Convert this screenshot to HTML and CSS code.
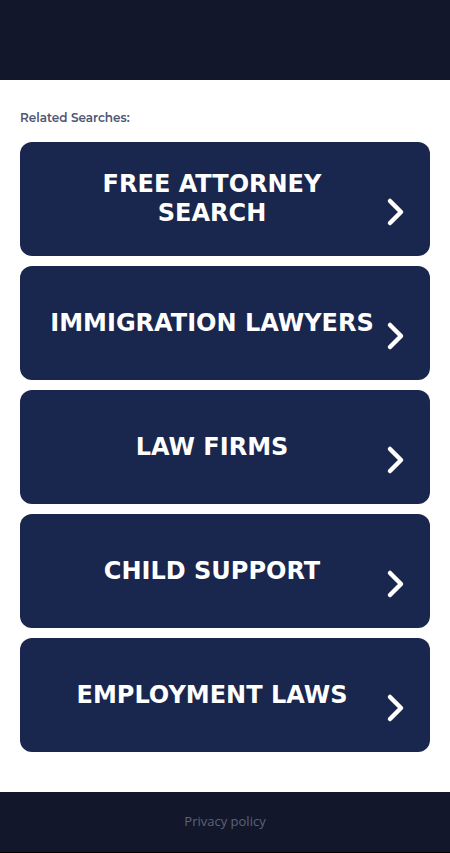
FILE: index.html
```html
<!DOCTYPE html>
<html>
<head>
<meta charset="utf-8">
<link rel="stylesheet" href="styles.css">
</head>
<body>
<header class="top"></header>
<main class="content">
  <div class="label">Related Searches:</div>
  <div class="list">
    <a class="btn"><span class="txt">FREE ATTORNEY SEARCH</span><svg class="chev" width="20" height="30" viewBox="0 0 20 30"><path d="M4 4 L15 15 L4 26" fill="none" stroke="#fff" stroke-width="4.5" stroke-linecap="round" stroke-linejoin="round"/></svg></a>
    <a class="btn"><span class="txt">IMMIGRATION LAWYERS</span><svg class="chev" width="20" height="30" viewBox="0 0 20 30"><path d="M4 4 L15 15 L4 26" fill="none" stroke="#fff" stroke-width="4.5" stroke-linecap="round" stroke-linejoin="round"/></svg></a>
    <a class="btn"><span class="txt">LAW FIRMS</span><svg class="chev" width="20" height="30" viewBox="0 0 20 30"><path d="M4 4 L15 15 L4 26" fill="none" stroke="#fff" stroke-width="4.5" stroke-linecap="round" stroke-linejoin="round"/></svg></a>
    <a class="btn"><span class="txt">CHILD SUPPORT</span><svg class="chev" width="20" height="30" viewBox="0 0 20 30"><path d="M4 4 L15 15 L4 26" fill="none" stroke="#fff" stroke-width="4.5" stroke-linecap="round" stroke-linejoin="round"/></svg></a>
    <a class="btn"><span class="txt">EMPLOYMENT LAWS</span><svg class="chev" width="20" height="30" viewBox="0 0 20 30"><path d="M4 4 L15 15 L4 26" fill="none" stroke="#fff" stroke-width="4.5" stroke-linecap="round" stroke-linejoin="round"/></svg></a>
  </div>
</main>
<footer class="foot"><span class="privacy">Privacy policy</span></footer>
</body>
</html>
```
FILE: styles.css
```css
html, body { margin: 0; padding: 0; background: #fff; }
body { width: 450px; }
.top { height: 80px; background: #12172c; }
.content { padding: 30px 20px 40px; }
.label {
  font-family: "Montserrat", "Lato", "Noto Sans", sans-serif;
  font-size: 12px;
  font-weight: 600;
  color: #505670;
  height: 32px;
  line-height: 16px;
}
.list { display: flex; flex-direction: column; gap: 10px; }
.btn {
  display: flex;
  align-items: center;
  height: 114px;
  box-sizing: border-box;
  background: #19264d;
  border-radius: 12px;
  padding: 0 24px 0 18px;
  text-decoration: none;
}
.txt {
  flex: 1;
  text-align: center;
  font-family: "DejaVu Sans", sans-serif;
  font-weight: bold;
  font-size: 24px;
  line-height: 29px;
  color: #fff;
  padding: 0 10px;
}
.chev { flex: none; margin-top: 26px; margin-left: 0; }
.foot {
  height: 60px;
  background: #12172c;
  border-bottom: 1px solid #000;
  display: flex;
  align-items: center;
  justify-content: center;
}
.privacy {
  font-family: "Open Sans", "Noto Sans", sans-serif;
  font-size: 13px;
  color: #5b6478;
  margin-top: -2px;
}
```
